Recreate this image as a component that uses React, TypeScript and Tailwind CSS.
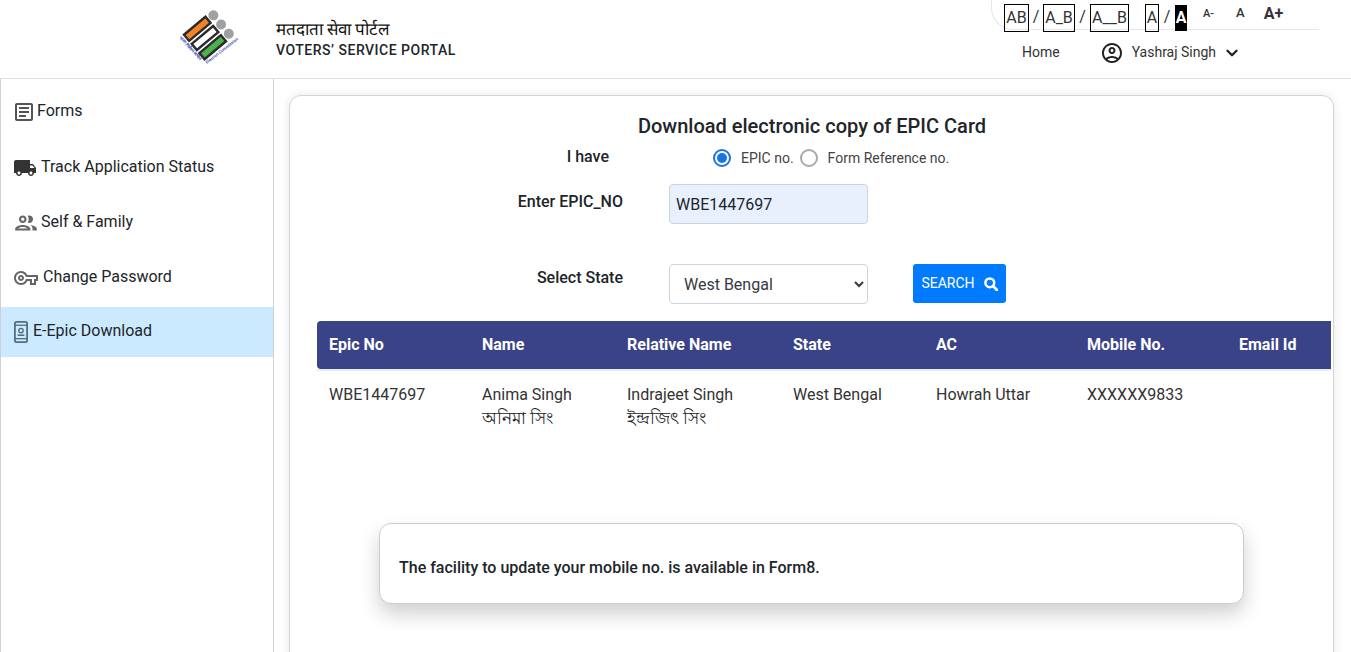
import { ChevronDown } from 'lucide-react';

const icons = {
  forms: 'M19 5v14H5V5h14m0-2H5c-1.1 0-2 .9-2 2v14c0 1.1.9 2 2 2h14c1.1 0 2-.9 2-2V5c0-1.1-.9-2-2-2z M14 17H7v-2h7v2zm3-4H7v-2h10v2zm0-4H7V7h10v2z',
  truck: 'M20 8h-3V4H3c-1.1 0-2 .9-2 2v11h2c0 1.66 1.34 3 3 3s3-1.34 3-3h6c0 1.66 1.34 3 3 3s3-1.34 3-3h2v-5l-3-4zM6 18.5c-.83 0-1.5-.67-1.5-1.5s.67-1.5 1.5-1.5 1.5.67 1.5 1.5-.67 1.5-1.5 1.5zm13.5-9l1.96 2.5H17V9.5h2.5zm-1.5 9c-.83 0-1.5-.67-1.5-1.5s.67-1.5 1.5-1.5 1.5.67 1.5 1.5-.67 1.5-1.5 1.5z',
  people: 'M9 13.75c-2.34 0-7 1.17-7 3.5V19h14v-1.75c0-2.33-4.66-3.5-7-3.5zM4.34 17c.84-.58 2.87-1.25 4.66-1.25s3.82.67 4.66 1.25H4.34zM9 12c1.93 0 3.5-1.57 3.5-3.5S10.93 5 9 5 5.5 6.57 5.5 8.5 7.07 12 9 12zm0-5c.83 0 1.5.67 1.5 1.5S9.83 10 9 10s-1.5-.67-1.5-1.5S8.17 7 9 7zm7.04 6.81c1.16.84 1.96 1.96 1.96 3.44V19h4v-1.75c0-2.02-3.5-3.17-5.96-3.44zM15 12c1.93 0 3.5-1.57 3.5-3.5S16.93 5 15 5c-.54 0-1.04.13-1.5.35.63.89 1 1.98 1 3.15s-.37 2.26-1 3.15c.46.22.96.35 1.5.35z',
  key: 'M22 19h-6v-4h-2.68c-1.14 2.42-3.6 4-6.32 4-3.86 0-7-3.14-7-7s3.14-7 7-7c2.72 0 5.17 1.58 6.32 4H24v6h-2v4zm-4-2h2v-4h2v-2H11.94l-.23-.67C11.01 8.34 9.11 7 7 7c-2.76 0-5 2.24-5 5s2.24 5 5 5c2.11 0 4.01-1.34 4.71-3.33l.23-.67H18v4zM7 15c-1.65 0-3-1.35-3-3s1.35-3 3-3 3 1.35 3 3-1.35 3-3 3zm0-4c-.55 0-1 .45-1 1s.45 1 1 1 1-.45 1-1-.45-1-1-1z',
  account: 'M12 2C6.48 2 2 6.48 2 12s4.48 10 10 10 10-4.48 10-10S17.52 2 12 2zM7.35 18.5C8.66 17.56 10.26 17 12 17s3.34.56 4.65 1.5C15.34 19.44 13.74 20 12 20s-3.34-.56-4.65-1.5zm10.79-1.38C16.45 15.8 14.32 15 12 15s-4.45.8-6.14 2.12C4.7 15.73 4 13.95 4 12c0-4.42 3.58-8 8-8s8 3.58 8 8c0 1.95-.7 3.73-1.86 5.12z M12 6c-1.93 0-3.5 1.57-3.5 3.5S10.07 13 12 13s3.5-1.57 3.5-3.5S13.93 6 12 6zm0 5c-.83 0-1.5-.67-1.5-1.5S11.17 8 12 8s1.5.67 1.5 1.5S12.83 11 12 11z',
};

function MatIcon({ d, className }: { d: string; className: string }) {
  return (
    <svg viewBox="0 0 24 24" fill="currentColor" fillRule="evenodd" className={className}>
      <path d={d} />
    </svg>
  );
}

function SearchGlyph() {
  return (
    <svg viewBox="0 0 14 14" className="w-[14px] h-[14px] shrink-0" fill="none" stroke="currentColor">
      <circle cx="5.8" cy="5.8" r="4.4" strokeWidth="2.5" />
      <path d="M9.2 9.2L13 13" strokeWidth="2.8" strokeLinecap="round" />
    </svg>
  );
}

function EpicIcon() {
  return (
    <svg viewBox="0 0 14 22" className="w-[14px] h-[22px] text-[#546e7a] shrink-0">
      <rect x="0.9" y="0.9" width="12.2" height="20.2" rx="1.6" fill="none" stroke="currentColor" strokeWidth="1.8" />
      <rect x="1" y="3.6" width="12" height="1.3" fill="currentColor" />
      <rect x="1" y="17" width="12" height="1.3" fill="currentColor" />
      <circle cx="7" cy="9.6" r="2.2" fill="none" stroke="currentColor" strokeWidth="1.4" />
      <rect x="3.6" y="13.4" width="6.8" height="1.6" fill="currentColor" />
    </svg>
  );
}

function Logo() {
  return (
    <svg viewBox="0 0 70 70" className="w-[70px] h-[70px]">
      <g transform="rotate(-40 35 33)">
        <rect x="21" y="17" width="28" height="8" fill="#f58220" stroke="#2b2b2b" strokeWidth="2.4" />
        <rect x="21" y="29" width="28" height="8" fill="#fff" stroke="#2b2b2b" strokeWidth="2.4" />
        <rect x="21" y="41" width="28" height="8" fill="#4caf50" stroke="#2b2b2b" strokeWidth="2.4" />
        <circle cx="56" cy="21" r="5" fill="#a0a0a0" />
        <circle cx="56" cy="33" r="5" fill="#a0a0a0" />
        <circle cx="56" cy="45" r="5" fill="#a0a0a0" />
      </g>
      <text x="0" y="0" transform="translate(9 33) rotate(47)" fontSize="4.2" fontWeight="700" fill="#3f51b5" fontFamily="Roboto, sans-serif">भारत निर्वाचन आयोग</text>
      <text x="0" y="0" transform="translate(37 59) rotate(-38)" fontSize="4.2" fontWeight="700" fill="#3f51b5" fontFamily="Roboto, sans-serif">Election Commission</text>
    </svg>
  );
}

const sideItems = [
  { label: 'Forms', mb: 'mb-[6px]', icon: <MatIcon d={icons.forms} className="w-[24px] h-[24px] text-[#555] -ml-[2px] mr-[1px] mt-[2px]" /> },
  { label: 'Track Application Status', mb: 'mb-[5px]', icon: <MatIcon d={icons.truck} className="w-[24px] h-[24px] text-[#333] -ml-[1px] mr-[4px] mt-[2px]" /> },
  { label: 'Self & Family', mb: 'mb-[5px]', icon: <MatIcon d={icons.people} className="w-[26px] h-[26px] text-[#666] -ml-[1px] mr-[2px] mt-[2px]" /> },
  { label: 'Change Password', mb: 'mb-[5px]', icon: <MatIcon d={icons.key} className="w-[24px] h-[24px] text-[#666] mr-[5px] mt-[2px]" /> },
];

const columns = [
  { name: 'Epic No', w: 'w-[153px]' },
  { name: 'Name', w: 'w-[145px]' },
  { name: 'Relative Name', w: 'w-[166px]' },
  { name: 'State', w: 'w-[143px]' },
  { name: 'AC', w: 'w-[151px]' },
  { name: 'Mobile No.', w: 'w-[152px]' },
  { name: 'Email Id', w: 'w-[104px]' },
];

const row: { en: string; bn?: string }[] = [
  { en: 'WBE1447697' },
  { en: 'Anima Singh', bn: 'অনিমা সিং' },
  { en: 'Indrajeet Singh', bn: 'ইন্দ্রজিৎ সিং' },
  { en: 'West Bengal' },
  { en: 'Howrah Uttar' },
  { en: 'XXXXXX9833' },
  { en: '' },
];

export default function App() {
  return (
    <div className="h-[652px] overflow-hidden bg-white text-[#212529] font-['Roboto','Noto_Sans_CJK_SC',sans-serif] flex flex-col">
      {/* Header */}
      <header className="h-[79px] shrink-0 border-b border-[#e0e0e0] flex">
        <div className="ml-[170px] mt-[5px] w-[70px] shrink-0">
          <Logo />
        </div>
        <div className="ml-[36px] mt-[19px]">
          <div className="text-[17px] leading-[20px] text-[#111]">मतदाता सेवा पोर्टल</div>
          <div className="text-[14px] leading-[20px] mt-[1px] font-medium tracking-[0.5px] text-[#212529]">VOTERS’ SERVICE PORTAL</div>
        </div>
        <div className="ml-auto mr-[32px] w-[328px] flex flex-col">
          <div className="h-[30px] border-b border-l border-[#e6e6e6] rounded-bl-[22px] flex items-start pl-[12px] pt-[4px] text-[16px] text-[#333]">
            <span className="w-[25px] h-[28px] border border-black text-center leading-[26px]">AB</span>
            <span className="w-[14px] text-center leading-[26px]">/</span>
            <span className="w-[32px] h-[28px] border border-black text-center leading-[26px]">A_B</span>
            <span className="w-[15px] text-center leading-[26px]">/</span>
            <span className="w-[39px] h-[28px] border border-black text-center leading-[26px]">A__B</span>
            <span className="w-[14px] h-[28px] ml-[16px] border border-black text-center leading-[26px]">A</span>
            <span className="w-[16px] text-center leading-[26px]">/</span>
            <span className="w-[12px] h-[26px] bg-black text-white text-center font-bold leading-[26px] mt-[1px]">A</span>
            <span className="ml-[16px] text-[11px] font-medium leading-[20px]">A-</span>
            <span className="ml-[22px] text-[13px] font-medium leading-[18px]">A</span>
            <span className="ml-[19px] text-[16px] font-bold leading-[20px]">A+</span>
          </div>
          <div className="flex items-center pl-[31px] h-[44px] text-[14px] text-[#333]">
            <span>Home</span>
            <MatIcon d={icons.account} className="w-[24px] h-[24px] text-[#222] ml-[40px] mt-[2px]" />
            <span className="ml-[8px]">Yashraj Singh</span>
            <ChevronDown className="w-[18px] h-[18px] ml-[7px] mt-[2px] text-[#222]" strokeWidth={3} />
          </div>
        </div>
      </header>

      <div className="flex-1 flex min-h-0">
        {/* Sidebar */}
        <aside className="w-[274px] shrink-0 border-l border-r border-[#cfcfcf] pt-[7px]">
          {sideItems.map((item) => (
            <div key={item.label} className={`h-[50px] ${item.mb} flex items-center pl-[13px] text-[16px]`}>
              {item.icon}
              <span className="-mt-[1px]">{item.label}</span>
            </div>
          ))}
          <div className="h-[50px] mt-[3px] flex items-center pl-[13px] text-[16px] bg-[#cceaff]">
            <EpicIcon />
            <span className="ml-[5px] -mt-[2px]">E-Epic Download</span>
          </div>
        </aside>

        {/* Main card */}
        <main className="flex-1 min-w-0 pl-[15px] pr-[17px] pt-[16px]">
          <div className="h-[700px] bg-white border border-[#d4d4d4] rounded-[12px] shadow-[0_0_10px_rgba(0,0,0,0.1)] pl-[27px] pr-[2px]">
            <h2 className="text-[20px] font-medium leading-[24px] mt-[18px] text-center pr-[24px]">Download electronic copy of EPIC Card</h2>

            <div className="flex items-center mt-[6px] h-[28px]">
              <label className="w-[292px] text-right font-medium text-[16px] leading-[24px] -mt-[3px]">I have</label>
              <div className="ml-[104px] flex items-center text-[14px] text-[#444]">
                <span className="w-[18px] h-[18px] rounded-full border-[2px] border-[#1a73e8] flex items-center justify-center">
                  <span className="w-[10px] h-[10px] rounded-full bg-[#1a73e8]" />
                </span>
                <span className="ml-[10px]">EPIC no.</span>
                <span className="ml-[6px] w-[18px] h-[18px] rounded-full border-[2px] border-[#a8a8a8]" />
                <span className="ml-[10px]">Form Reference no.</span>
              </div>
            </div>

            <div className="flex items-start mt-[12px]">
              <label className="w-[306px] text-right font-medium text-[16px] leading-[24px] mt-[6px]">Enter EPIC_NO</label>
              <input
                readOnly
                value="WBE1447697"
                className="ml-[46px] w-[199px] h-[40px] rounded-[4px] border border-[#ced4da] bg-[#e8f0fe] px-[6px] text-[16px] text-[#212529] outline-none"
              />
            </div>

            <div className="flex items-start mt-[40px]">
              <label className="w-[306px] text-right font-medium text-[16px] leading-[24px] mt-[2px]">Select State</label>
              <select
                defaultValue="West Bengal"
                className="ml-[46px] w-[199px] h-[40px] rounded-[4px] border border-[#ced4da] bg-white pl-[10px] text-[16px] text-[#343a40] outline-none"
              >
                <option>West Bengal</option>
              </select>
              <button className="ml-[45px] w-[93px] h-[39px] rounded-[3px] bg-[#007bff] text-white text-[14px] flex items-center justify-center gap-[9px]">
                SEARCH
                <SearchGlyph />
              </button>
            </div>

            {/* Table */}
            <div className="mt-[17px]">
              <div className="h-[50px] border-b-2 border-[#e9ecef]">
                <div className="flex h-[48px] items-center bg-[#3a4387] rounded-tl-[4px] rounded-bl-[4px] text-white font-bold text-[16px]">
                  {columns.map((c) => (
                    <div key={c.name} className={`${c.w} px-[12px] whitespace-nowrap`}>{c.name}</div>
                  ))}
                </div>
              </div>
              <div className="flex pt-[12px] text-[16px] leading-[24px] text-[#333]">
                {row.map((cell, i) => (
                  <div key={i} className={`${columns[i].w} px-[12px] whitespace-nowrap`}>
                    <div>{cell.en}</div>
                    {cell.bn && <div className="text-[17px] -mt-[1px] text-[#222]">{cell.bn}</div>}
                  </div>
                ))}
              </div>
            </div>

            {/* Notice */}
            <div className="ml-[62px] mt-[93px] w-[865px] h-[81px] rounded-[12px] border border-[#cccccc] bg-white shadow-[0_10px_20px_rgba(0,0,0,0.19)] flex items-center pl-[19px] pt-[8px] font-medium text-[16px]">
              The facility to update your mobile no. is available in Form8.
            </div>
          </div>
        </main>
      </div>
    </div>
  );
}
